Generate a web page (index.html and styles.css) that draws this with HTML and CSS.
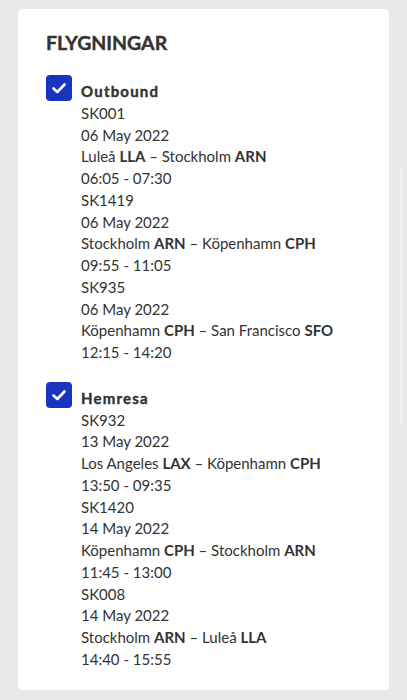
FILE: index.html
```html
<!DOCTYPE html>
<html lang="sv">
<head>
<meta charset="utf-8">
<link rel="stylesheet" href="styles.css">
</head>
<body>
<div class="page">
  <section class="card">
    <h2 class="title">FLYGNINGAR</h2>
    <div class="group">
      <span class="check"><svg viewBox="0 0 26 26" width="26" height="26"><path d="M7.5 13.5 L11.3 17 L18.5 9.5" fill="none" stroke="#fff" stroke-width="2.6" stroke-linecap="round" stroke-linejoin="round"/></svg></span>
      <div class="lines">
        <div class="label">Outbound</div>
        <div>SK001</div>
        <div>06 May 2022</div>
        <div>Luleå <b>LLA</b> – Stockholm <b>ARN</b></div>
        <div>06:05 - 07:30</div>
        <div>SK1419</div>
        <div>06 May 2022</div>
        <div>Stockholm <b>ARN</b> – Köpenhamn <b>CPH</b></div>
        <div>09:55 - 11:05</div>
        <div>SK935</div>
        <div>06 May 2022</div>
        <div>Köpenhamn <b>CPH</b> – San Francisco <b>SFO</b></div>
        <div>12:15 - 14:20</div>
      </div>
    </div>
    <div class="group">
      <span class="check"><svg viewBox="0 0 26 26" width="26" height="26"><path d="M7.5 13.5 L11.3 17 L18.5 9.5" fill="none" stroke="#fff" stroke-width="2.6" stroke-linecap="round" stroke-linejoin="round"/></svg></span>
      <div class="lines">
        <div class="label">Hemresa</div>
        <div>SK932</div>
        <div>13 May 2022</div>
        <div>Los Angeles <b>LAX</b> – Köpenhamn <b>CPH</b></div>
        <div>13:50 - 09:35</div>
        <div>SK1420</div>
        <div>14 May 2022</div>
        <div>Köpenhamn <b>CPH</b> – Stockholm <b>ARN</b></div>
        <div>11:45 - 13:00</div>
        <div>SK008</div>
        <div>14 May 2022</div>
        <div>Stockholm <b>ARN</b> – Luleå <b>LLA</b></div>
        <div>14:40 - 15:55</div>
      </div>
    </div>
  </section>
  <div class="scroll"></div>
</div>
</body>
</html>
```
FILE: styles.css
```css
html, body {
  margin: 0;
  padding: 0;
  background: #e9e9e9;
}
body {
  font-family: "Lato", "Open Sans", sans-serif;
  color: #333;
}
.page {
  position: relative;
  width: 407px;
  height: 700px;
  padding: 9px 0 0 18px;
  box-sizing: border-box;
}
.card {
  width: 371px;
  height: 681px;
  box-sizing: border-box;
  background: #fff;
  border-radius: 4px;
  padding: 22px 0 0 28px;
}
.title {
  margin: 0 0 26px;
  font-size: 19.5px;
  line-height: 24px;
  font-weight: 700;
  color: #333;
  -webkit-text-stroke: 0.4px #333;
}
.group {
  display: flex;
  gap: 9px;
  margin-bottom: 24px;
}
.check {
  flex: none;
  width: 26px;
  height: 26px;
  border-radius: 4px;
  background: #1834c0;
  margin-top: -6px;
}
.check svg { display: block; }
.lines {
  font-size: 15px;
  line-height: 21.75px;
  font-weight: 400;
}
.lines b { font-weight: 700; }
.label {
  font-weight: 700;
  letter-spacing: 1.2px;
  -webkit-text-stroke: 0.4px #333;
}
.scroll {
  position: absolute;
  left: 400px;
  top: 168px;
  width: 3px;
  height: 258px;
  background: #f1f1f1;
  border-radius: 2px;
}
```
